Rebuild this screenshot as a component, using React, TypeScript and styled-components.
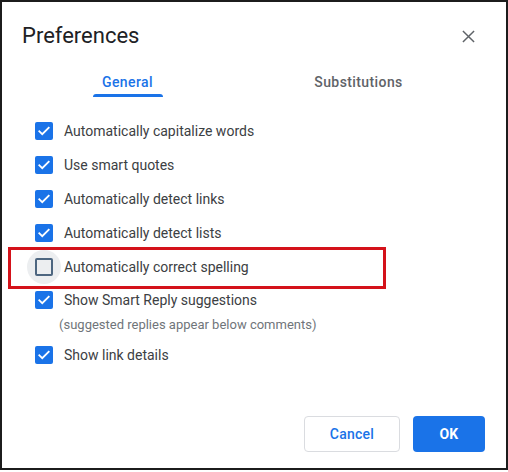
import React from "react";
import styled, { createGlobalStyle } from "styled-components";

const GlobalStyle = createGlobalStyle`
  html, body { margin: 0; padding: 0; background: #ffffff; }
  * { box-sizing: border-box; }
`;

const Frame = styled.div`
  position: relative;
  width: 508px;
  height: 470px;
  border: 2px solid #1c1c1c;
  background: #ffffff;
  display: flex;
  flex-direction: column;
  font-family: Roboto, "Liberation Sans", Arial, sans-serif;
`;

const Header = styled.div`
  display: flex;
  align-items: center;
  justify-content: space-between;
  height: 32px;
  margin-top: 18px;
  padding: 0 30px 0 20px;
`;

const Title = styled.h1`
  margin: 0;
  font-size: 22px;
  font-weight: 400;
  color: #202124;
  line-height: 28px;
`;

const CloseButton = styled.button`
  border: none;
  background: transparent;
  padding: 0;
  width: 16px;
  height: 16px;
  display: flex;
  align-items: center;
  justify-content: center;
  color: #5f6368;
  cursor: pointer;
`;

const TabBar = styled.div`
  display: grid;
  grid-template-columns: 1fr 1fr;
  width: 462px;
  margin: 14px 0 0 10px;
`;

const Tab = styled.div<{ $active?: boolean }>`
  display: flex;
  flex-direction: column;
  align-items: center;
  padding-top: 8px;
  font-size: 14px;
  font-weight: 500;
  letter-spacing: 0.4px;
  line-height: 16px;
  color: ${(p) => (p.$active ? "#1a73e8" : "#5f6368")};
`;

const TabLabel = styled.span`
  display: inline-block;
  padding: 0 8px;
`;

const TabIndicator = styled.span<{ $active?: boolean }>`
  display: block;
  height: 3px;
  margin-top: 4px;
  width: 70px;
  border-radius: 3px 3px 0 0;
  background: ${(p) => (p.$active ? "#1a73e8" : "transparent")};
`;

const OptionList = styled.div`
  display: flex;
  flex-direction: column;
  margin-top: 17px;
  padding-left: 33px;
`;

const Row = styled.label<{ $height?: number }>`
  display: flex;
  align-items: center;
  gap: 11px;
  height: ${(p) => p.$height ?? 34}px;
  cursor: pointer;
`;

const BoxWrap = styled.span<{ $focused?: boolean }>`
  position: relative;
  width: 18px;
  height: 18px;
  flex: none;
  &::before {
    content: "";
    position: absolute;
    left: -8px;
    top: -8px;
    width: 34px;
    height: 34px;
    border-radius: 50%;
    background: ${(p) => (p.$focused ? "#eceef0" : "transparent")};
  }
`;

const Box = styled.span<{ $checked?: boolean }>`
  position: relative;
  display: flex;
  align-items: center;
  justify-content: center;
  width: 18px;
  height: 18px;
  border-radius: 2px;
  background: ${(p) => (p.$checked ? "#1a73e8" : "transparent")};
  border: ${(p) => (p.$checked ? "none" : "2px solid #4d6680")};
`;

const Label = styled.span`
  font-size: 14px;
  color: #3c4043;
  line-height: 20px;
`;

const Hint = styled.div`
  font-size: 13px;
  color: #70757a;
  line-height: 18px;
  padding-left: 24px;
  margin-bottom: 4px;
`;

const Footer = styled.div`
  margin-top: auto;
  display: flex;
  justify-content: flex-end;
  gap: 13px;
  padding: 0 21px 16px 0;
`;

const Button = styled.button<{ $primary?: boolean }>`
  height: 36px;
  width: ${(p) => (p.$primary ? 72 : 96)}px;
  border-radius: 4px;
  font-family: Roboto, "Liberation Sans", Arial, sans-serif;
  font-size: 14px;
  font-weight: ${(p) => (p.$primary ? 700 : 500)};
  letter-spacing: 0.25px;
  cursor: pointer;
  border: ${(p) => (p.$primary ? "none" : "1px solid #dadce0")};
  background: ${(p) => (p.$primary ? "#1a73e8" : "#ffffff")};
  color: ${(p) => (p.$primary ? "#ffffff" : "#1a73e8")};
`;

const Highlight = styled.div`
  position: absolute;
  left: 6px;
  top: 245px;
  width: 378px;
  height: 42px;
  border: 3px solid #d4121a;
  pointer-events: none;
`;

const Check = () => (
  <svg width="14" height="14" viewBox="0 0 24 24" fill="none">
    <path d="M4 12.5l5 5L20 6.5" stroke="#ffffff" strokeWidth="3.2" strokeLinecap="square" />
  </svg>
);

const CloseIcon = () => (
  <svg width="13" height="13" viewBox="0 0 14 14">
    <path d="M1 1L13 13M13 1L1 13" stroke="currentColor" strokeWidth="1.6" />
  </svg>
);

type Opt = { label: string; checked: boolean; focused?: boolean; hint?: string };

const options: Opt[] = [
  { label: "Automatically capitalize words", checked: true },
  { label: "Use smart quotes", checked: true },
  { label: "Automatically detect links", checked: true },
  { label: "Automatically detect lists", checked: true },
  { label: "Automatically correct spelling", checked: false, focused: true },
  {
    label: "Show Smart Reply suggestions",
    checked: true,
    hint: "(suggested replies appear below comments)",
  },
  { label: "Show link details", checked: true },
];

export default function App() {
  return (
    <>
      <GlobalStyle />
      <Frame>
        <Header>
          <Title>Preferences</Title>
          <CloseButton aria-label="Close">
            <CloseIcon />
          </CloseButton>
        </Header>
        <TabBar>
          <Tab $active>
            <TabLabel>General</TabLabel>
            <TabIndicator $active />
          </Tab>
          <Tab>
            <TabLabel>Substitutions</TabLabel>
            <TabIndicator />
          </Tab>
        </TabBar>
        <OptionList>
          {options.map((o) => (
            <React.Fragment key={o.label}>
              <Row $height={o.hint ? 32 : 34}>
                <BoxWrap $focused={o.focused}>
                  <Box $checked={o.checked}>{o.checked && <Check />}</Box>
                </BoxWrap>
                <Label>{o.label}</Label>
              </Row>
              {o.hint && <Hint>{o.hint}</Hint>}
            </React.Fragment>
          ))}
        </OptionList>
        <Footer>
          <Button>Cancel</Button>
          <Button $primary>OK</Button>
        </Footer>
        <Highlight />
      </Frame>
    </>
  );
}
